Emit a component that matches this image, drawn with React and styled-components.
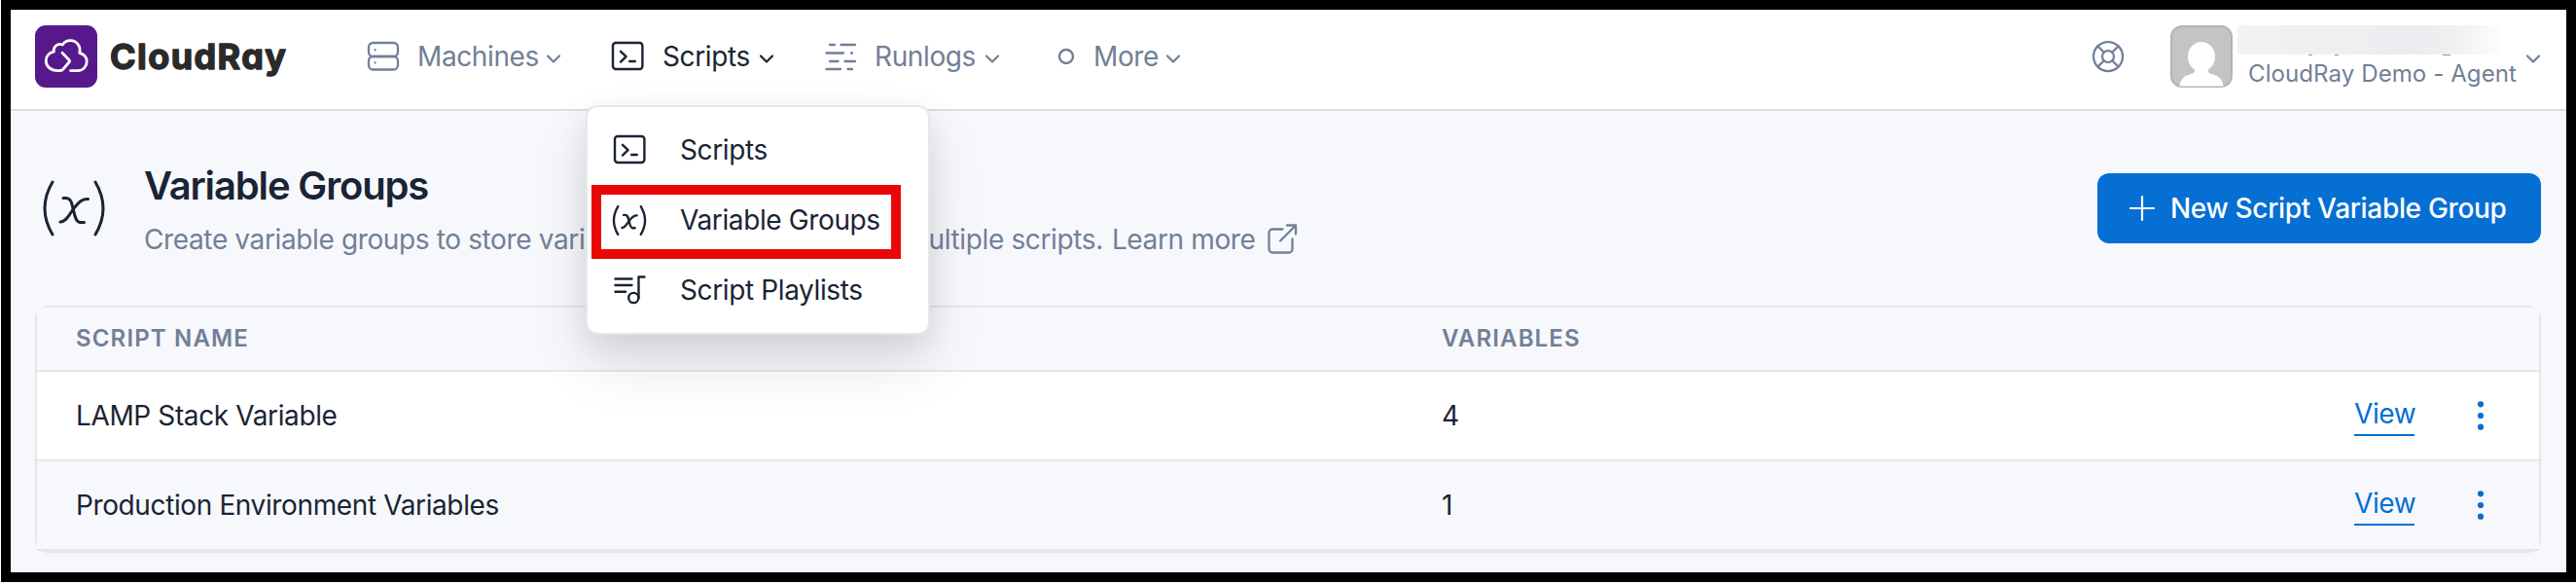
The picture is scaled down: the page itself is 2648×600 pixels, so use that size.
import React from "react";
import styled, { createGlobalStyle } from "styled-components";
import { LifeBuoy } from "lucide-react";

const GlobalStyle = createGlobalStyle`
  * {
    box-sizing: border-box;
  }

  body {
    margin: 0;
    background: #ffffff;
    color: #1a2433;
    font-family: Inter, "Liberation Sans", sans-serif;
    font-size: 28px;
    line-height: 36px;
    letter-spacing: -0.38px;
  }

  svg {
    display: block;
    flex-shrink: 0;
    fill: none;
    stroke: currentColor;
    stroke-linecap: round;
    stroke-linejoin: round;
  }
`;

const Frame = styled.div`
  width: 2648px;
  height: 600px;
  padding: 0 0 2px 1px;
`;

const Page = styled.div`
  height: 598px;
  border: 10px solid #000000;
  background: #f7f8fc;
  overflow: hidden;
`;

const Header = styled.header`
  display: flex;
  align-items: center;
  height: 104px;
  padding: 0 26px 6px 25px;
  background: #ffffff;
  border-bottom: 2px solid #dcdfe5;
`;

const Brand = styled.a`
  display: flex;
  align-items: center;
  gap: 12px;
  width: 340px;
`;

const LogoMark = styled.div`
  width: 64px;
  height: 64px;
  border-radius: 11px;
  background: #56188a;
  color: #ffffff;
`;

const BrandText = styled.text`
  fill: #2a2a2a;
  stroke: #2a2a2a;
  stroke-width: 1.4px;
  font-size: 36px;
  font-weight: 700;
  letter-spacing: 0;
  font-feature-settings: "cv11";
`;

const Nav = styled.nav`
  display: flex;
  align-items: center;
  gap: 50px;
`;

const NavItem = styled.div`
  position: relative;
  display: flex;
  align-items: center;
  color: ${(props) => (props.$active ? "#1a2433" : "#718096")};
`;

const NavIcon = styled.span`
  display: flex;
  justify-content: center;
  width: 36px;
  margin-right: ${(props) => props.$gap || 17}px;
`;

const NavLabel = styled.span`
  width: ${(props) => props.$width}px;
  margin-right: 9px;
  white-space: nowrap;
`;

const ChevronIcon = styled.svg`
  position: relative;
  top: 3px;
`;

const Menu = styled.div`
  position: absolute;
  top: 68px;
  left: -25px;
  z-index: 2;
  width: 354px;
  padding: 8px 0;
  border: 2px solid #e5e7eb;
  border-radius: 12px;
  background: #ffffff;
  box-shadow: 0 30px 60px rgba(0, 0, 0, 0.11), 0 10px 30px rgba(0, 0, 0, 0.08);
`;

const MenuItem = styled.a`
  display: flex;
  align-items: center;
  gap: 34px;
  height: 72px;
  padding-left: 25px;
  color: #1a2433;
  white-space: nowrap;
`;

const Highlight = styled.div`
  position: absolute;
  top: 80px;
  left: 4px;
  width: 318px;
  height: 76px;
  border: 10px solid #e80808;
`;

const Account = styled.div`
  display: flex;
  align-items: center;
  margin-left: auto;
  color: #718096;
`;

const Avatar = styled.div`
  width: 64px;
  height: 64px;
  margin-left: 46px;
  border-radius: 12px;
  background: #c4c4c4;
  box-shadow: inset 0 0 0 2px rgba(0, 0, 0, 0.08);
  overflow: hidden;
`;

const AccountText = styled.div`
  display: flex;
  flex-direction: column;
  width: 287px;
  height: 64px;
  margin: 0 9px 0 5px;
`;

const HiddenName = styled.div`
  position: relative;
  flex-shrink: 0;
  width: 271px;
  height: 30px;
  background: linear-gradient(
    100deg,
    #f3f3f4 0%,
    #eff0f1 22%,
    #eeeff1 45%,
    #ebecef 62%,
    #eeeff1 80%,
    #fcfcfd 98%
  );
`;

const Descender = styled.i`
  position: absolute;
  top: 30px;
  left: ${(props) => props.$x}px;
  width: ${(props) => props.$w}px;
  height: 1px;
  background: #8d98aa;
`;

const AccountName = styled.div`
  padding: 2px 0 0 11px;
  font-size: 24px;
  letter-spacing: 0.1px;
  white-space: nowrap;
`;

const PageHeader = styled.section`
  display: flex;
  align-items: center;
  height: 200px;
  padding: 0 26px 0 33px;
`;

const Heading = styled.div`
  margin: 2px 0 0 40px;
`;

const Title = styled.h1`
  margin: 0 0 13px;
  font-size: 40px;
  font-weight: 600;
  line-height: 48px;
  letter-spacing: -1.15px;
`;

const Subtitle = styled.p`
  display: flex;
  align-items: center;
  margin: 0;
  color: #718096;
  letter-spacing: -0.37px;
  white-space: nowrap;
`;

const LearnMore = styled.a`
  display: flex;
  align-items: center;
  gap: 13px;
  margin-left: 9px;
`;

const NewButton = styled.button`
  display: flex;
  align-items: center;
  gap: 15px;
  width: 456px;
  height: 72px;
  margin: 0 0 1px auto;
  padding: 0 0 0 32px;
  border: 0;
  border-radius: 12px;
  background: #056fd3;
  color: #ffffff;
  font: inherit;
  font-weight: 500;
  letter-spacing: -0.32px;
  white-space: nowrap;
`;

/* The rows keep square corners over the rounded ring of the card. */
const TableCard = styled.div`
  margin: 2px 28px 0 27px;
  border-radius: 12px;
  box-shadow: 0 0 0 2px #e5e7eb, 0 2px 6px rgba(0, 0, 0, 0.04);
`;

const Row = styled.div`
  display: grid;
  grid-template-columns: 1404px 938px 1fr;
  align-items: center;
  height: ${(props) => (props.$head ? 66 : 92)}px;
  padding-left: 40px;
  border-bottom: 2px solid #e5e7eb;
  background: ${(props) => (props.$white ? "#ffffff" : "#f7f8fc")};
`;

const HeadCell = styled.div`
  color: #718096;
  font-size: 24px;
  font-weight: 600;
  letter-spacing: 1.15px;
`;

const Cell = styled.div`
  white-space: nowrap;
`;

const Actions = styled.div`
  display: flex;
  align-items: center;
  gap: 64px;
  color: #056fd3;
`;

const ViewLink = styled.a`
  margin-top: 1px;
  width: 62px;
  height: 41px;
  border-bottom: 2px solid #056fd3;
`;

const Dots = styled.svg`
  && {
    fill: currentColor;
    stroke: none;
  }
`;

const Chevron = () => (
  <ChevronIcon width="16" height="12" viewBox="0 0 16 12" strokeWidth="2.2">
    <path d="M2 2.5l6 6 6-6" />
  </ChevronIcon>
);

const ServerIcon = () => (
  <svg width="36" height="32" viewBox="0 0 36 32" strokeWidth="2.3">
    <rect x="3" y="2" width="30" height="14" rx="4.5" />
    <rect x="3" y="16" width="30" height="13.5" rx="4.5" />
    <path d="M9.6 9.2v.1M9.6 22.4v.1" />
  </svg>
);

const TerminalIcon = () => (
  <svg width="36" height="32" viewBox="0 0 36 32" strokeWidth="2.4">
    <rect x="3" y="2" width="30.4" height="27" rx="3" />
    <path d="M11 10.8l5.6 5.4-5.6 5.4M20.2 21h5.6" />
  </svg>
);

const LogsIcon = () => (
  <svg width="36" height="32" viewBox="0 0 36 32" strokeWidth="2.3">
    <path d="M7 4h5M18.5 4h14.5M3.5 12.5h17.5M29 12.5h1M7 21h8.5M22.5 21h10.5M3.5 29h14.5M25.5 29h4.5" />
  </svg>
);

const CircleIcon = () => (
  <svg width="18" height="18" viewBox="0 0 18 18" strokeWidth="2.4">
    <circle cx="9" cy="9" r="7" />
  </svg>
);

const VariableIcon = ({ width, height, stroke }) => (
  <svg width={width} height={height} viewBox="0 0 64 58" strokeWidth={stroke}>
    <path d="M10 2Q-6 29 10 56M54 2Q70 29 54 56" />
    <path d="M21 18.5h2.5c5 0 6 4 7.5 10.5s3 14.5 7 14.5h4.5" />
    <path d="M46.5 19.5c-6-1-10 4-14.5 9.5S24.5 43 18 43" />
  </svg>
);

const PlaylistIcon = () => (
  <svg width="36" height="32" viewBox="0 0 36 32" strokeWidth="2.4">
    <path d="M3.5 4.5h17M3.5 11h17M3.5 17.8h10.5M27.5 24V2.5h6" />
    <circle cx="22.3" cy="24" r="5.1" />
  </svg>
);

const ExternalIcon = () => (
  <svg width="32" height="32" viewBox="0 0 32 32" strokeWidth="2.3">
    <path d="M15.5 5.5H5A3.5 3.5 0 0 0 1.5 9v17A3.5 3.5 0 0 0 5 29.5h17a3.5 3.5 0 0 0 3.5-3.5V15.5" />
    <path d="M13 17.5L29 1.5M20 1.5h9v9" />
  </svg>
);

const PlusIcon = () => (
  <svg width="28" height="28" viewBox="0 0 28 28" strokeWidth="2.2">
    <path d="M14 2v24M2 14h24" />
  </svg>
);

const CloudIcon = () => (
  <svg width="64" height="64" viewBox="0 0 64 64" strokeWidth="2.8">
    <path d="M28 28.3l6.9 7.1q1.3 1.3 0 2.6l-6 7.2q-1.3 1.4-5.6 1.4C16 46.6 11.3 42 11.3 36.8c0-5 3.2-8.7 8-9.6-1-4.6 3.7-9.4 9-7.2 1.8-2.8 4.6-4.3 8-4.3 6.5 0 11 5.7 9.5 12.8 4.3.8 7.4 4.3 7.4 8.8 0 5.2-3.7 9.3-9.2 9.3h-7.5" />
  </svg>
);

const PersonIcon = () => (
  <svg width="64" height="64" viewBox="0 0 64 64">
    <path
      fill="#ffffff"
      stroke="none"
      d="M32 17c8 0 14 7 14 15 0 6-2.5 10.5-7 13.500-.5 3 1 4 5 5 6 1.500 9.500 5 10.500 12H9.500c1-7 4.500-10.500 10.500-12 4-1 5.500-2 5-5C20.500 42.500 18 38 18 32c0-8 6-15 14-15z"
    />
  </svg>
);

const rows = [
  { name: "LAMP Stack Variable", count: 4 },
  { name: "Production Environment Variables", count: 1 },
];

const ScriptsMenu = () => (
  <Menu>
    <MenuItem>
      <TerminalIcon />
      Scripts
    </MenuItem>
    <MenuItem>
      <VariableIcon width="36" height="31" stroke="4.4" />
      Variable Groups
    </MenuItem>
    <MenuItem>
      <PlaylistIcon />
      Script Playlists
    </MenuItem>
    <Highlight />
  </Menu>
);

const TopBar = () => (
  <Header>
    <Brand>
      <LogoMark>
        <CloudIcon />
      </LogoMark>
      <svg width="190" height="64" viewBox="0 0 190 64">
        <BrandText x="1" y="44.5" textLength="181">
          CloudRay
        </BrandText>
      </svg>
    </Brand>
    <Nav>
      <NavItem>
        <NavIcon>
          <ServerIcon />
        </NavIcon>
        <NavLabel $width={123}>Machines</NavLabel>
        <Chevron />
      </NavItem>
      <NavItem $active>
        <NavIcon $gap={18}>
          <TerminalIcon />
        </NavIcon>
        <NavLabel $width={90}>Scripts</NavLabel>
        <Chevron />
        <ScriptsMenu />
      </NavItem>
      <NavItem>
        <NavIcon>
          <LogsIcon />
        </NavIcon>
        <NavLabel $width={104}>Runlogs</NavLabel>
        <Chevron />
      </NavItem>
      <NavItem>
        <NavIcon $gap={10}>
          <CircleIcon />
        </NavIcon>
        <NavLabel $width={65}>More</NavLabel>
        <Chevron />
      </NavItem>
    </Nav>
    <Account>
      <LifeBuoy size={36} strokeWidth={1.5} />
      <Avatar>
        <PersonIcon />
      </Avatar>
      <AccountText>
        <HiddenName>
          <Descender $x={73} $w={4} />
          <Descender $x={100} $w={4} />
          <Descender $x={211} $w={8} />
        </HiddenName>
        <AccountName>CloudRay Demo - Agent</AccountName>
      </AccountText>
      <Chevron />
    </Account>
  </Header>
);

const App = () => {
  return (
    <>
      <GlobalStyle />
      <Frame>
        <Page>
          <TopBar />
          <PageHeader>
            <VariableIcon width="64" height="58" stroke="3" />
            <Heading>
              <Title>Variable Groups</Title>
              <Subtitle>
                Create variable groups to store variables that can be used in multiple scripts.
                <LearnMore>
                  Learn more
                  <ExternalIcon />
                </LearnMore>
              </Subtitle>
            </Heading>
            <NewButton>
              <PlusIcon />
              New Script Variable Group
            </NewButton>
          </PageHeader>
          <TableCard>
            <Row $head>
              <HeadCell>SCRIPT NAME</HeadCell>
              <HeadCell>VARIABLES</HeadCell>
            </Row>
            {rows.map((row, i) => (
              <Row key={row.name} $white={i % 2 === 0}>
                <Cell>{row.name}</Cell>
                <Cell>{row.count}</Cell>
                <Actions>
                  <ViewLink>View</ViewLink>
                  <Dots width="8" height="32" viewBox="0 0 8 32">
                    <circle cx="4" cy="4.3" r="3.1" />
                    <circle cx="4" cy="16" r="3.1" />
                    <circle cx="4" cy="27.7" r="3.1" />
                  </Dots>
                </Actions>
              </Row>
            ))}
          </TableCard>
        </Page>
      </Frame>
    </>
  );
};

export default App;
